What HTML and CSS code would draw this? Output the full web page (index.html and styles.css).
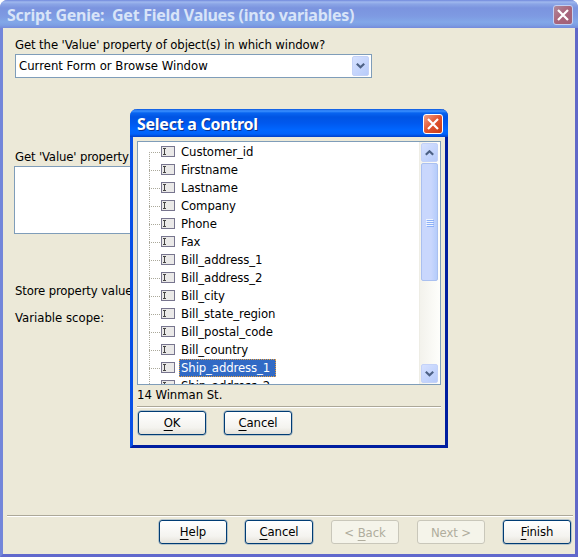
FILE: index.html
```html
<!DOCTYPE html>
<html lang="en">
<head>
<meta charset="utf-8">
<title>Script Genie</title>
<link rel="stylesheet" href="styles.css">
</head>
<body>
<main class="window">
  <header class="titlebar">
    <h1 class="title">Script Genie:&nbsp; Get Field Values (into variables)</h1>
    <button class="close" aria-label="Close"><svg width="12" height="12" viewBox="0 0 12 12"><path d="M1 1L11 11M11 1L1 11"/></svg></button>
  </header>
  <section class="body">
    <label class="text w1">Get the 'Value' property of object(s) in which window?</label>
    <div class="combo"><span class="text w2">Current Form or Browse Window</span><span class="arrow"><svg width="9" height="6" viewBox="0 0 9 6"><path d="M.8 .8L4.5 4.3L8.2 .8"/></svg></span></div>
    <label class="text w3">Get 'Value' property</label>
    <div class="listbox"></div>
    <p class="text w4">Store property value</p>
    <p class="text w5">Variable scope:</p>
    <footer class="footer">
      <button class="btn"><span><u>H</u>elp</span></button>
      <button class="btn"><span><u>C</u>ancel</span></button>
      <button class="btn off" disabled><span>&lt; <u>B</u>ack</span></button>
      <button class="btn off" disabled><span>Next &gt;</span></button>
      <button class="btn"><span><u>F</u>inish</span></button>
    </footer>
  </section>
</main>
<section class="dialog">
  <header class="titlebar">
    <h2 class="title">Select a Control</h2>
    <button class="close" aria-label="Close"><svg width="12" height="12" viewBox="0 0 12 12"><path d="M1 1L11 11M11 1L1 11"/></svg></button>
  </header>
  <div class="dialog-body">
    <div class="tree">
      <ul class="items" id="items"></ul>
      <div class="scroll">
        <span class="arrow"><svg width="9" height="6" viewBox="0 0 9 6"><path d="M.8 4.8L4.5 1.3L8.2 4.8"/></svg></span>
        <span class="thumb"><i></i><i></i><i></i><i></i></span>
        <span class="arrow down"><svg width="9" height="6" viewBox="0 0 9 6"><path d="M.8 .8L4.5 4.3L8.2 .8"/></svg></span>
      </div>
    </div>
    <p class="text status">14 Winman St.</p>
    <div class="actions">
      <button class="btn"><span><u>O</u>K</span></button>
      <button class="btn"><span><u>C</u>ancel</span></button>
    </div>
  </div>
</section>
<script src="app.js"></script>
</body>
</html>
```
FILE: styles.css
```css
* { box-sizing: border-box; margin: 0; padding: 0; }
body { width: 578px; height: 557px; overflow: hidden; background: #fff; font: 13px/18px "DejaVu Sans Condensed", "DejaVu Sans", sans-serif; font-stretch: condensed; color: #000; }
button { font: inherit; color: inherit; }
.window { width: 578px; height: 557px; border: 3px solid #7386da; border-top: 0; border-right-color: #6068c8; border-bottom-color: #6068cc; border-radius: 8px 8px 0 0; background: #ece9d8; display: flex; flex-direction: column; }
.window > .titlebar { margin: 0 -3px; height: 28px; padding: 2px 5px 0 7px; border-radius: 7px 7px 0 0; background: linear-gradient(#7088dc 0, #a0b8ee 2px, #8ba5e6 4px, #7b94df 8px, #7e9ae2 16px, #82a7e8 22px, #7d9fe4 25px, #758bdb 28px); color: #d8e4f8; }
.titlebar { display: flex; align-items: center; justify-content: space-between; }
.title { font: bold 16px/24px "Noto Sans", sans-serif; white-space: pre; letter-spacing: -.26px; }
.close { width: 20px; height: 20px; display: flex; align-items: center; justify-content: center; border: 1px solid #c3d0f3; border-radius: 3px; background: linear-gradient(135deg, #b08a9c, #a9657b 50%, #a06078); }
.close svg path { stroke: #fff; stroke-width: 2.2; fill: none; }
.text { white-space: nowrap; display: block; }
.w1 { letter-spacing: -.11px; }
.w3, .w4 { letter-spacing: -.15px; }
.body { flex: 1; display: flex; flex-direction: column; padding: 8px 3px 0 12px; }
.combo { width: 357px; height: 24px; border: 1px solid #7f9db9; background: #fff; margin-bottom: 70px; display: flex; align-items: center; justify-content: space-between; padding: 0 2px 0 3px; }
.arrow { width: 17px; height: 20px; display: flex; align-items: center; justify-content: center; border: 1px solid #c4d2f8; border-radius: 2px; background: linear-gradient(135deg, #d6e1ff, #b7cbfa); }
.arrow path { fill: none; stroke: #4d6185; stroke-width: 2.2; }
.listbox { width: 357px; height: 68px; margin-left: -1px; border: 1px solid #7f9db9; background: #fff; margin-bottom: 48px; }
.w5 { margin-top: 9px; }
.footer { margin: auto -1px 0 -8px; height: 39px; border-top: 1px solid #aca899; box-shadow: inset 0 1px #fff; display: flex; justify-content: flex-end; gap: 18px; padding: 4px 2px 0 0; }
.btn { width: 68px; height: 24px; border: 1px solid #003c74; border-radius: 3px; background: linear-gradient(#fff, #f4f3ef 70%, #e5e2d9); box-shadow: 0 0 0 .5px #7f9db9; display: flex; align-items: center; justify-content: center; white-space: pre; letter-spacing: -.1px; padding-bottom: 1px; }
.btn u { text-decoration: underline; text-decoration-thickness: 1px; text-underline-offset: 3px; }
.btn.off { border-color: #c9c7ba; background: #f5f4ea; box-shadow: none; color: #b0ad9d; padding: 1px 0 0; }
.dialog { position: absolute; left: 130px; top: 109px; width: 318px; height: 339px; border: 3px solid #0850e6; border-top: 0; border-right-color: #001ea0; border-bottom-color: #001ea0; border-radius: 7px 7px 0 0; background: #ece9d8; display: flex; flex-direction: column; }
.dialog > .titlebar { margin: 0 -3px; height: 28px; padding: 2px 5px 0 7px; border-radius: 7px 7px 0 0; background: linear-gradient(#0855dd 0, #3c91ff 2px, #0864f0 4px, #0054e3 8px, #0058ee 14px, #0066ff 21px, #0062fb 25px, #0040c8 28px); color: #fff; }
.dialog .title { text-shadow: 1px 1px #0a318e; }
.dialog .close { border-color: #fff; background: linear-gradient(135deg, #f0a088, #e0532f 50%, #c83c14); }
.dialog-body { padding: 4px 4px 0; }
.tree { height: 244px; border: 1px solid #7f9db9; background: #fff; display: flex; overflow: hidden; }
.items { list-style: none; flex: 1; padding: 1px 0 0 11px; overflow: hidden; }
.item { height: 18px; display: flex; align-items: center; background: repeating-linear-gradient(#aaa89a 0 1px, transparent 1px 2px) left / 1px 100% no-repeat; white-space: nowrap; }
.item::before { content: ""; width: 12px; height: 1px; background: repeating-linear-gradient(90deg, #aaa89a 0 1px, transparent 1px 2px); }
.item:first-child { background-size: 1px 9px; background-position: left bottom; }
.icon { display: block; margin: 0 4px 1px 0; }
.name { padding: 0 2px 0 1px; line-height: 16px; border: 1px solid transparent; letter-spacing: -.1px; margin-top: -1px; }
.sel .name { background: #316ac5; color: #fff; border: 1px dotted #e8a040; padding-right: 5px; }
.scroll { width: 21px; border-left: 1px solid #eeede5; background: linear-gradient(90deg, #f3f2ec, #fefefb); padding: 1px; display: flex; flex-direction: column; }
.scroll .arrow { width: 17px; height: 19px; }
.thumb { width: 17px; height: 118px; margin-top: 1px; border: 1px solid #aac0f0; border-radius: 2px; background: linear-gradient(90deg, #c9d7fd 60%, #b5ccfb); display: flex; flex-direction: column; align-items: center; justify-content: center; gap: 1px; }
.thumb i { width: 7px; height: 1px; background: #eef4fe; box-shadow: 1px 1px #8cb0f8; }
.down { margin-top: auto; }
.status { margin-top: 1px; height: 19px; letter-spacing: -.05px; }
.actions { border-top: 1px solid #aca899; box-shadow: inset 0 1px #fff; display: flex; gap: 18px; padding: 4px 0 0 1px; margin-top: 1px; }
```
FILE: app.js
```js
const names = ["Customer_id", "Firstname", "Lastname", "Company", "Phone", "Fax", "Bill_address_1", "Bill_address_2", "Bill_city", "Bill_state_region", "Bill_postal_code", "Bill_country", "Ship_address_1", "Ship_address_2"];
const icon = '<svg class="icon" width="14" height="11" viewBox="0 0 14 11"><rect x=".5" y=".5" width="13" height="10" fill="#eae9e8" stroke="#77758e"/><path d="M2 2.5H5M2 8.5H5M3.5 2.5V8.5" stroke="#444" fill="none"/></svg>';
document.getElementById("items").innerHTML = names.map((n, i) =>
  `<li class="item${i === 12 ? " sel" : ""}">${icon}<span class="name">${n}</span></li>`).join("");
```
